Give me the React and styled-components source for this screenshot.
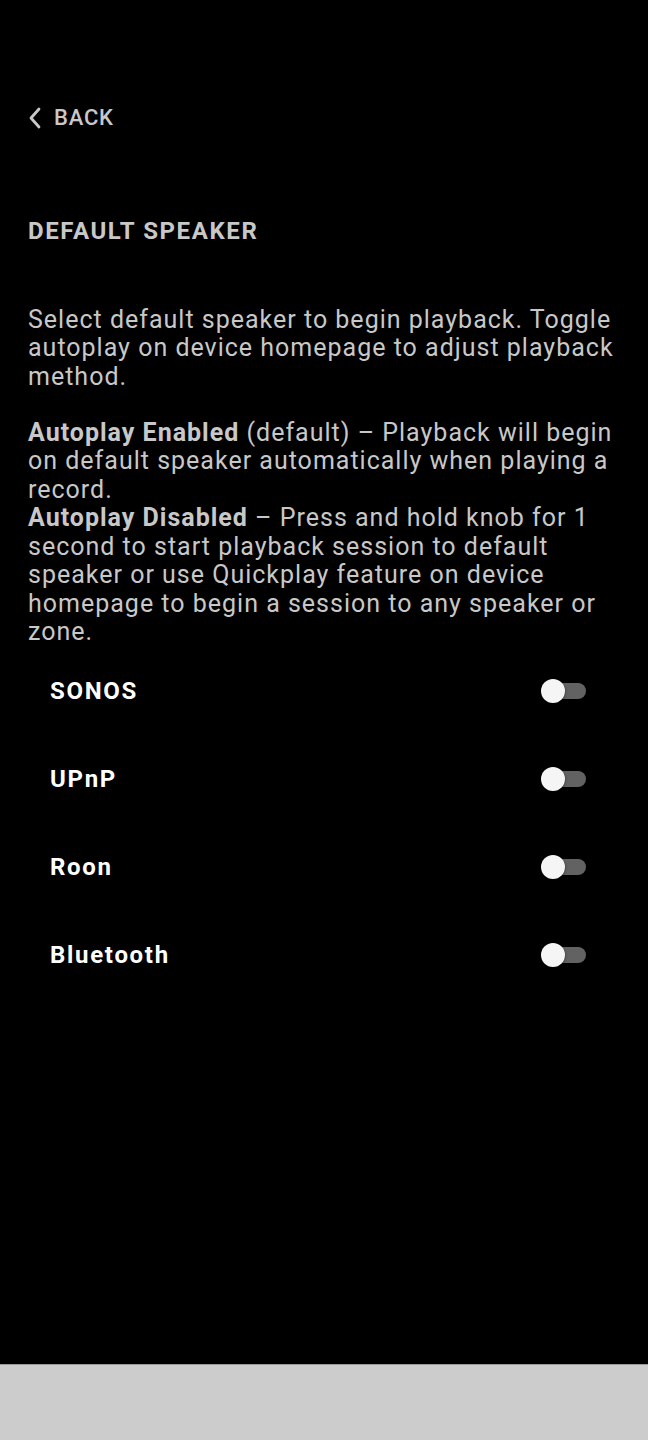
import React, { useState } from 'react';
import styled, { createGlobalStyle } from 'styled-components';

const GlobalStyle = createGlobalStyle`
  html, body {
    margin: 0;
    padding: 0;
    background: #000;
  }
  body {
    font-family: Roboto, "Liberation Sans", sans-serif;
  }
`;

const Page = styled.div`
  width: 648px;
  display: flex;
  flex-direction: column;
`;

const Screen = styled.div`
  height: 1364px;
  background: #000;
  padding: 0 28px;
  box-sizing: border-box;
  display: flex;
  flex-direction: column;
`;

const BackButton = styled.button`
  margin-top: 104px;
  height: 28px;
  align-self: flex-start;
  display: flex;
  align-items: center;
  gap: 12px;
  padding: 0;
  background: none;
  border: none;
  color: #c8c8c8;
  font-family: inherit;
  font-size: 22px;
  line-height: 28px;
  font-weight: 500;
  letter-spacing: 0.8px;
  cursor: pointer;
`;

const Title = styled.h1`
  margin: 85px 0 0;
  font-size: 24px;
  line-height: 28px;
  font-weight: 700;
  color: #c8c8c8;
  letter-spacing: 1.6px;
`;

const Text = styled.p`
  margin: ${p => p.$top || 0}px 0 0;
  font-size: 25px;
  line-height: 28.5px;
  letter-spacing: 1px;
  color: #c8c8c8;
`;

const Strong = styled.b`
  font-weight: 700;
`;

const List = styled.div`
  display: flex;
  flex-direction: column;
`;

const Row = styled.div`
  height: 88px;
  display: flex;
  align-items: center;
  justify-content: space-between;
  padding: 0 34px 0 22px;
`;

const Label = styled.span`
  font-size: 24px;
  font-weight: 700;
  color: #fff;
  letter-spacing: 1.7px;
`;

const Switch = styled.button`
  position: relative;
  width: 45px;
  height: 24px;
  padding: 0;
  border: none;
  background: none;
  cursor: pointer;
`;

const Track = styled.span`
  position: absolute;
  left: 6px;
  right: 0;
  top: 4px;
  height: 16px;
  border-radius: 8px;
  background: ${p => p.$on ? '#8ab4f8' : '#626262'};
`;

const Thumb = styled.span`
  position: absolute;
  top: 0;
  left: ${p => p.$on ? '21px' : '0'};
  width: 24px;
  height: 24px;
  border-radius: 50%;
  background: #f5f5f5;
  box-shadow: 0 1px 3px rgba(0,0,0,0.5);
`;

const Footer = styled.div`
  height: 76px;
  background: #cbcccb;
  border-top: 1px solid #999;
  box-sizing: border-box;
`;

const speakers = ['SONOS', 'UPnP', 'Roon', 'Bluetooth'];

export default function App() {
  const [active, setActive] = useState(null);

  return (
    <Page>
      <GlobalStyle />
      <Screen>
        <BackButton>
          <svg width="14" height="22" viewBox="0 0 14 22" fill="none">
            <path d="M11 2 L3 11 L11 20" stroke="#c8c8c8" strokeWidth="2.8" strokeLinecap="round" strokeLinejoin="round" />
          </svg>
          BACK
        </BackButton>
        <Title>DEFAULT SPEAKER</Title>
        <Text $top={60.75}>
          Select default speaker to begin playback. Toggle autoplay on device homepage to adjust playback method.
        </Text>
        <Text $top={27.5}>
          <Strong>Autoplay Enabled</Strong> (default) – Playback will begin on default speaker automatically when playing a record.
        </Text>
        <Text>
          <Strong>Autoplay Disabled</Strong> – Press and hold knob for 1 second to start playback session to default speaker or use Quickplay feature on device homepage to begin a session to any speaker or zone.
        </Text>
        <List>
          {speakers.map(s => (
            <Row key={s}>
              <Label>{s}</Label>
              <Switch onClick={() => setActive(active === s ? null : s)}>
                <Track $on={active === s} />
                <Thumb $on={active === s} />
              </Switch>
            </Row>
          ))}
        </List>
      </Screen>
      <Footer />
    </Page>
  );
}
